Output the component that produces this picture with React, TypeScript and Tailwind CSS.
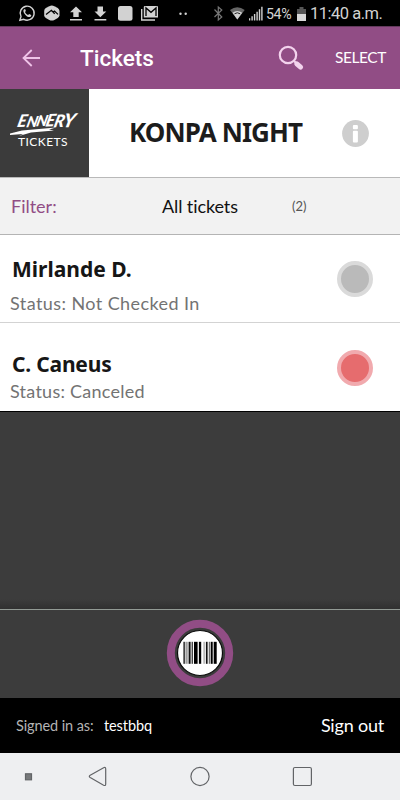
import type { ReactNode } from "react";

const StatusBar = () => {
    return <div className="flex h-[26px] shrink-0 items-center bg-black font-[Roboto,sans-serif] text-[#d2d2d2]">
        <svg width="265" height="26" viewBox="0 0 265 26" fill="#d2d2d2">
            <g fill="none" stroke="#d2d2d2" strokeWidth="1.4">
                <path d="M19.9 20.3 L21 16.5 A7 7 0 1 1 23.8 19.3 Z" />
            </g>
            <path d="M24.2 9.2 C23 10 23.2 11.6 24.3 13.4 C26 16 28 17.3 29.8 17 C31 16.7 31.4 15.8 31.2 15 L29.1 13.9 L28.1 15 C26.6 14.4 25.6 13.4 25 12 L25.9 11 L25.1 9.1 Z" />
            <path d="M49.3 6.2 Q51.8 5 54.3 6.2 L57.8 8 Q59.5 9.3 59.5 11 V15.2 Q59.4 17 57.8 18 L54.3 19.9 Q51.8 21 49.3 19.9 L45.8 18 Q44.2 17 44.2 15.2 V11 Q44.2 9.2 45.8 8 Z" />
            <path d="M46 14.5 L51.4 10.3 L54.7 13.7 M53.3 12 L54.5 11 L58 14.4" fill="none" stroke="#000" strokeWidth="1.3" />
            <path d="M76 6.5 L82 12.3 H78.7 V17 H73.3 V12.3 H70 Z M70 19 H82 V20.5 H70 Z" />
            <path d="M97.5 6.5 H103 V11.5 H106.3 L100.3 17.3 L94.5 11.5 H97.5 Z M94.5 19 H106.3 V20.5 H94.5 Z" />
            <rect x="118" y="6" width="14.5" height="14.8" rx="2.5" />
            <path d="M144.8 6 H157 Q158 6 158 7 V17.5 H143.8 V7 Q143.8 6 144.8 6 Z" />
            <path d="M146 16 V8 L151 12.3 L156 8 V16" fill="none" stroke="#000" strokeWidth="1.3" />
            <path d="M141.7 9 V20 H155" fill="none" stroke="#d2d2d2" strokeWidth="1.4" />
            <circle cx="180.5" cy="13.8" r="1.2" />
            <circle cx="185.7" cy="13.8" r="1.2" />
            <path d="M214.5 9.5 L221.8 17 L218.3 20 V7 L221.8 10 L214.5 17" fill="none" stroke="#777" strokeWidth="1.2" />
            <path d="M230 9.9 Q237.3 4.7 244.7 9.9 L237.3 19.5 Z" fill="#666" />
            <path d="M232.5 12.8 Q237.3 9 242.2 12.8 L237.3 19.5 Z" />
            <path d="M234.5 13.8 Q237.3 11.7 240.2 13.8" fill="none" stroke="#222" strokeWidth="1" />
            <path d="M249 18.2 H250.3 V20.5 H249 Z M251.4 16.2 H252.8 V20.5 H251.4 Z M253.9 14 H255.3 V20.5 H253.9 Z M256.4 11.7 H257.8 V20.5 H256.4 Z M258.8 9.2 H260.2 V20.5 H258.8 Z M261.2 6.7 H262.6 V20.5 H261.2 Z" />
        </svg>
        <span className="w-[32px] pl-px pt-[3px] text-[14.2px] tracking-[-0.4px]">54%</span>
        <svg width="9" height="15" viewBox="0 0 9 15" className="mt-[2px]">
            <path d="M2.5 0 H6.5 V2 H9 V8 H0 V2 H2.5 Z" fill="#555" />
            <path d="M0 7 H9 V14 H0 Z" fill="#d8d8d8" />
        </svg>
        <span className="whitespace-nowrap pl-[4px] pt-[3px] text-[16.5px] tracking-[-0.5px]">11:40 a.m.</span>
    </div>
}

const Header = () => {
    return <div className="flex h-[63px] shrink-0 items-center border-t border-[#633a5d] bg-[#914d85] text-white">
        <svg width="18" height="18" viewBox="0 0 18 18" className="ml-[22px]" fill="none" stroke="#efc3e8" strokeWidth="1.8">
            <path d="M18 9 H1.5 M9.7 1 L1.5 9 L9.7 17" />
        </svg>
        <h1 className="ml-[40px] w-[198px] pt-px font-[Roboto,sans-serif] text-[22.5px] font-medium">Tickets</h1>
        <svg width="27" height="27" viewBox="0 0 27 27" fill="none" stroke="#f3d3ed">
            <circle cx="10" cy="10" r="8.2" strokeWidth="2.2" />
            <path d="M15.8 15.8 L19 19" strokeWidth="2.2" />
            <path d="M18.8 18.8 L22.6 22.2" strokeWidth="5" strokeLinecap="round" />
        </svg>
        <button className="ml-[30px] font-[Lato,sans-serif] text-[15.5px] tracking-[-0.45px]">SELECT</button>
    </div>
}

const Logo = () => {
    return <svg width="89" height="88" viewBox="0 0 89 88" className="shrink-0 bg-[#3b3b3b]" fill="#fff">
        <g transform="translate(16.5 38) rotate(-2) skewX(-16)" fontFamily="Lato, sans-serif" fontWeight="900" fontStyle="italic">
            <text x="0 9.5 19 28.5 37 46" y="0 0.5 0 0.5 1.5 2" fontSize="18" transform="scale(1 1)">
                <tspan fontSize="17">E</tspan><tspan fontSize="15">NN</tspan><tspan fontSize="17">E</tspan><tspan fontSize="17">R</tspan><tspan fontSize="19">Y</tspan>
            </text>
        </g>
        <path d="M10 44.5 L22 41.5 L56 38.5 L49 40.5 L54 41.5 L31 43.5 L19 47 L23 45 L10 46 Z" />
        <text x="18" y="56.5" fontFamily="Lato, sans-serif" fontSize="12" textLength="49.5" lengthAdjust="spacing">TICKETS</text>
    </svg>
}

const EventRow = () => {
    return <div className="flex h-[89px] shrink-0 items-center border-b border-[#b9b9b9] bg-white">
        <Logo />
        <h2 className="ml-[40px] w-[213px] whitespace-nowrap pb-[2px] font-['Noto_Sans',sans-serif] text-[26px] font-bold tracking-[-0.9px] text-[#1c1c1c]">KONPA NIGHT</h2>
        <svg width="27" height="27" viewBox="0 0 27 27">
            <circle cx="13.5" cy="13.5" r="13.4" fill="#cecece" />
            <rect x="10.9" y="5" width="5" height="4.3" rx="1" fill="#fff" />
            <rect x="10.9" y="10.7" width="5" height="11.7" rx="1" fill="#fff" />
        </svg>
    </div>
}

const Filter = () => {
    return <div className="flex h-[57px] shrink-0 items-center border-b border-[#b4b4b4] bg-[#f2f2f2] font-[Lato,sans-serif]">
        <span className="ml-[11px] w-[151px] text-[18px] text-[#914d85]">Filter:</span>
        <span className="w-[130px] text-[18px] tracking-[-0.1px] text-[#111]">All tickets</span>
        <span className="pt-px text-[13px] text-[#555]">(2)</span>
    </div>
}

type TicketProps = {
    name: ReactNode;
    status: ReactNode;
    className: string;
    dot: string;
}

const Ticket = ({name, status, className, dot}: TicketProps) => {
    return <div className={`flex shrink-0 items-start justify-between bg-white pr-[27px] ${className}`}>
        <div className="pl-[10px]">
            {name}
            {status}
        </div>
        <div className={`size-[36px] rounded-full border-[4.5px] ${dot}`} />
    </div>
}

const bars = [
    [0, 2, "#444"], [3, 1.2, "#777"], [5.3, 2, "#111"], [8.3, 1.3, "#333"], [10.7, 3.6, "#000"], [15.6, 2.3, "#000"],
    [20, 1.7, "#bbb"], [22.6, 1.7, "#111"], [25.5, 1, "#555"], [27.4, 2, "#000"], [30.4, 3, "#000"],
] as const;

const ScanBar = () => {
    return <div className="flex h-[89px] shrink-0 items-center justify-center border-t border-[#929a94] bg-[#3c3c3c] pb-[2px]">
        <button aria-label="Scan">
            <svg width="68" height="68" viewBox="0 0 68 68">
                <circle cx="34" cy="34" r="29.2" fill="#3b3b3b" stroke="#914d85" strokeWidth="8" />
                <circle cx="34" cy="34" r="22.5" fill="#fff" stroke="#0b0b0b" strokeWidth="1.2" />
                {bars.map(([x, w, fill]) => <rect key={x} x={17.3 + x} y="22.8" width={w} height="22" fill={fill} />)}
            </svg>
        </button>
    </div>
}

const NavBar = () => {
    return <div className="flex h-[47px] shrink-0 bg-[#eeeff1]">
        <svg width="400" height="47" viewBox="0 0 400 47" fill="none" stroke="#626467" strokeWidth="1.2">
            <rect x="25.5" y="20.8" width="6" height="6" fill="#77797b" />
            <path d="M103.6 14.7 Q105.7 13.8 105.7 16 V31 Q105.7 33.2 103.6 32.2 L90.2 24.6 Q88.4 23.4 90.2 22.3 Z" />
            <circle cx="200" cy="23.5" r="9.1" />
            <rect x="293.4" y="14.5" width="18" height="18" rx="1.5" />
        </svg>
    </div>
}

const App = () => {
    return <div className="flex h-[800px] w-[400px] flex-col overflow-hidden bg-[#3c3c3c] [font-variant-ligatures:none]">
        <StatusBar />
        <Header />
        <EventRow />
        <Filter />
        <Ticket
            className="h-[88px] border-b border-[#d3d3d3] pt-[20px]"
            name={<p className="pb-[8px] pl-[2px] font-['Noto_Sans',sans-serif] text-[21px] font-bold leading-[28px] text-[#161616]">Mirlande D.</p>}
            status={<p className="font-[Lato,sans-serif] text-[18px] leading-[24px] tracking-[0.42px] text-[#737373]">Status: Not Checked In</p>}
            dot="mt-[6px] border-[#dadada] bg-[#bababa]"
        />
        <Ticket
            className="h-[88px] pt-[27px]"
            name={<p className="pb-px pl-[2px] font-['Noto_Sans',sans-serif] text-[21px] font-bold leading-[28px] tracking-[-0.2px] text-[#161616]">C. Caneus</p>}
            status={<p className="font-[Lato,sans-serif] text-[18px] leading-[24px] tracking-[0.25px] text-[#737373]">Status: Canceled</p>}
            dot="border-[#f1aaae] bg-[#e66c6e]"
        />
        <div className="h-[198px] shrink-0 border-t border-black bg-linear-to-b from-[#3c3c3c] from-95% to-[#303030]" />
        <ScanBar />
        <div className="flex h-[55px] shrink-0 items-center bg-black font-[Lato,sans-serif] text-white">
            <span className="ml-[16px] w-[88px] text-[14.5px] tracking-[-0.1px] text-[#b4b4b4]">Signed in as:</span>
            <span className="text-[14.5px] tracking-[-0.1px]">testbbq</span>
            <button className="ml-auto mr-[16px] text-[18px] tracking-[-0.2px]">Sign out</button>
        </div>
        <NavBar />
    </div>
}

export default App;
